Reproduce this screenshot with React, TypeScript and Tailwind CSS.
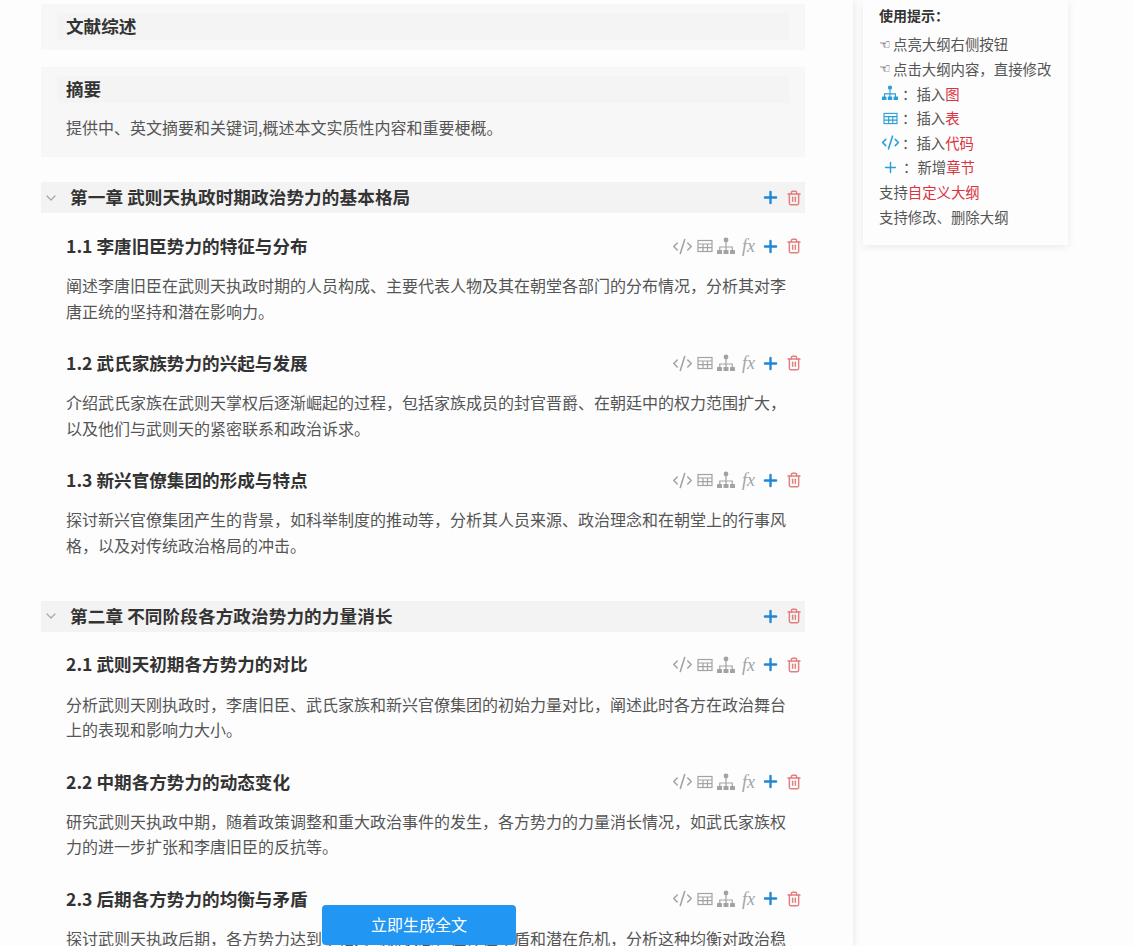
import { ChevronDown, CodeXml, Plus, Trash2 } from "lucide-react";

const chapters = [
  {
    title: "第一章 武则天执政时期政治势力的基本格局",
    sections: [
      {
        title: "1.1 李唐旧臣势力的特征与分布",
        body: "阐述李唐旧臣在武则天执政时期的人员构成、主要代表人物及其在朝堂各部门的分布情况，分析其对李唐正统的坚持和潜在影响力。",
      },
      {
        title: "1.2 武氏家族势力的兴起与发展",
        body: "介绍武氏家族在武则天掌权后逐渐崛起的过程，包括家族成员的封官晋爵、在朝廷中的权力范围扩大，以及他们与武则天的紧密联系和政治诉求。",
      },
      {
        title: "1.3 新兴官僚集团的形成与特点",
        body: "探讨新兴官僚集团产生的背景，如科举制度的推动等，分析其人员来源、政治理念和在朝堂上的行事风格，以及对传统政治格局的冲击。",
      },
    ],
  },
  {
    title: "第二章 不同阶段各方政治势力的力量消长",
    sections: [
      {
        title: "2.1 武则天初期各方势力的对比",
        body: "分析武则天刚执政时，李唐旧臣、武氏家族和新兴官僚集团的初始力量对比，阐述此时各方在政治舞台上的表现和影响力大小。",
      },
      {
        title: "2.2 中期各方势力的动态变化",
        body: "研究武则天执政中期，随着政策调整和重大政治事件的发生，各方势力的力量消长情况，如武氏家族权力的进一步扩张和李唐旧臣的反抗等。",
      },
      {
        title: "2.3 后期各方势力的均衡与矛盾",
        body: "探讨武则天执政后期，各方势力达到了相对均衡状态，但存在矛盾和潜在危机，分析这种均衡对政治稳定的影响。",
      },
    ],
  },
];

const TableIcon = ({ className }: { className: string }) => (
  <svg viewBox="0 0 16 14" fill="none" stroke="currentColor" strokeWidth="1.2" className={className}>
    <rect x="1" y="1.5" width="14" height="11" />
    <path d="M1 5h14M1 8.7h14M6 5v7.5M10.5 5v7.5" />
  </svg>
);

const TreeIcon = ({ className }: { className: string }) => (
  <svg viewBox="0 0 20 18" fill="currentColor" className={className}>
    <circle cx="10" cy="3" r="2.4" />
    <path d="M9.4 5h1.2v4.4h6.2v4h-1.2v-2.8h-5v2.8H9.4v-2.8h-5v2.8H3.200v-4h6.200z" />
    <rect x="1" y="13" width="5" height="4" rx="0.5" />
    <rect x="7.500" y="13" width="5" height="4" rx="0.5" />
    <rect x="14" y="13" width="5" height="4" rx="0.5" />
  </svg>
);

const AddDelete = () => (
  <>
    <Plus size={19} strokeWidth={3} className="text-[#2186d6]" />
    <Trash2 size={16} strokeWidth={2.2} className="ml-[6px] text-[#e37f7f]" />
  </>
);

const Tools = () => (
  <div className="flex items-center text-[#a3a3a3]">
    <CodeXml size={21} strokeWidth={1.8} />
    <TableIcon className="ml-[4px] h-[14px] w-[16px]" />
    <TreeIcon className="ml-[3px] h-[18px] w-[20px]" />
    <span className="ml-[6px] w-[16px] font-['Liberation_Serif',serif] text-[18px] italic leading-none">fx</span>
    <span className="ml-[3px] flex items-center">
      <AddDelete />
    </span>
  </div>
);

const Tip = ({ children }: { children: React.ReactNode }) => (
  <div className="flex h-[24.6px] items-center whitespace-nowrap">{children}</div>
);

const Red = ({ children }: { children: React.ReactNode }) => <span className="text-[#d9333f]">{children}</span>;

export default function App() {
  return (
    <div className="relative flex h-[946px] w-[1134px] overflow-hidden bg-[#fdfdfd] font-['Noto_Sans_CJK_SC','Liberation_Sans',sans-serif]">
      <main className="h-full w-[853px] shrink-0 bg-[#fdfdfd] pl-[41px] pr-[48px] pt-[4px] shadow-[2px_0_6px_rgba(0,0,0,0.07)]">
        <div className="mb-[17px] h-[46px] bg-[#f7f7f7] px-[16px] py-[9px]">
          <h2 className="h-[27px] bg-[#f4f4f4] pl-[9px] text-[17.6px] font-bold leading-[25px] text-[#333]">文献综述</h2>
        </div>
        <div className="mb-[25px] h-[90px] bg-[#f7f7f7] px-[16px] py-[9px]">
          <h2 className="h-[27px] bg-[#f4f4f4] pl-[9px] text-[17.6px] font-bold leading-[25px] text-[#333]">摘要</h2>
          <p className="mt-[11px] pl-[9px] text-[16px] leading-[26px] text-[#555]">提供中、英文摘要和关键词,概述本文实质性内容和重要梗概。</p>
        </div>

        {chapters.map((c) => (
          <section key={c.title} className="pb-[16px]">
            <div className="flex h-[31px] items-center bg-[#f3f3f3] pr-[3px]">
              <ChevronDown size={16} className="ml-[2px] text-[#aaa]" />
              <h2 className="ml-[11px] flex-1 text-[17.6px] font-bold tracking-[0.1px] text-[#333]">{c.title}</h2>
              <AddDelete />
            </div>
            <div className="pt-[20px]">
              {c.sections.map((s) => (
                <div key={s.title} className="mb-[26px] pl-[25px]">
                  <div className="mb-[14px] flex h-[26px] items-center justify-between pr-[3px]">
                    <h3 className="text-[17.6px] font-bold text-[#333]">{s.title}</h3>
                    <Tools />
                  </div>
                  <p className="pr-[17px] text-[16px] leading-[25.6px] text-[#555]">{s.body}</p>
                </div>
              ))}
            </div>
          </section>
        ))}
      </main>

      <aside className="ml-[10px] h-[245px] w-[205px] bg-[#fdfdfd] px-[16px] pt-[5px] text-[14.4px] text-[#555] shadow-[0_2px_8px_rgba(0,0,0,0.08)]">
        <div className="mb-[7px] text-[14px] font-bold leading-[20px] text-[#333]">使用提示：</div>
        <Tip><span className="w-[14px] font-['DejaVu_Sans'] text-[13px] font-bold text-[#333]">☜</span>点亮大纲右侧按钮</Tip>
        <Tip><span className="w-[14px] font-['DejaVu_Sans'] text-[13px] font-bold text-[#333]">☜</span>点击大纲内容，直接修改</Tip>
        <Tip>
          <TreeIcon className="ml-[2px] h-[16px] w-[18px] text-[#2a9fd8]" />
          <span className="ml-[3px]">：插入<Red>图</Red></span>
        </Tip>
        <Tip>
          <TableIcon className="ml-[4px] h-[13px] w-[15px] text-[#2a9fd8]" />
          <span className="ml-[4px]">：插入<Red>表</Red></span>
        </Tip>
        <Tip>
          <CodeXml size={19} strokeWidth={2} className="ml-[2px] text-[#2a9fd8]" />
          <span className="ml-[2px]">：插入<Red>代码</Red></span>
        </Tip>
        <Tip>
          <Plus size={17} strokeWidth={2} className="ml-[3px] text-[#2a9fd8]" />
          <span className="ml-[4px]">：新增<Red>章节</Red></span>
        </Tip>
        <Tip>支持<Red>自定义大纲</Red></Tip>
        <Tip>支持修改、删除大纲</Tip>
      </aside>

      <button className="absolute left-[322px] top-[905px] h-[40px] w-[194px] rounded-[4px] bg-[#2196f3] pb-[3px] text-[16px] text-white">立即生成全文</button>
    </div>
  );
}
